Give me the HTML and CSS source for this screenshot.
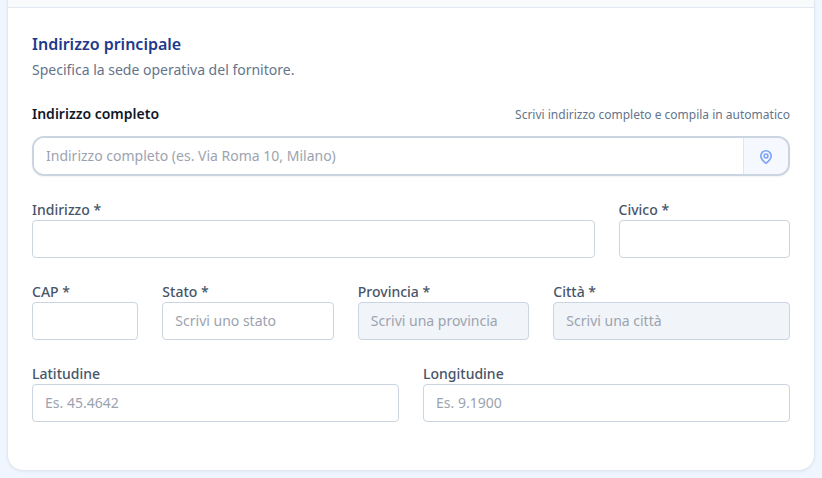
FILE: index.html
```html
<!DOCTYPE html>
<html lang="it">
  <head>
    <meta charset="UTF-8" />
    <meta name="viewport" content="width=device-width, initial-scale=1.0" />
    <title>Indirizzo principale</title>
    <link rel="stylesheet" href="styles.css">
  </head>
  <body>
    <form class="card">
      <div class="card-header"></div>

      <div class="card-body">
        <div class="intro">
          <h2>Indirizzo principale</h2>
          <p>Specifica la sede operativa del fornitore.</p>
        </div>

        <div class="search">
          <div class="search-top">
            <label for="fullAddress">Indirizzo completo</label>
            <span class="hint">Scrivi indirizzo completo e compila in automatico</span>
          </div>
          <div class="search-box">
            <input type="text" id="fullAddress" placeholder="Indirizzo completo (es. Via Roma 10, Milano)" />
            <button type="button" aria-label="Compila indirizzo" disabled>
              <svg viewBox="0 0 24 24" width="16" height="16" fill="none" stroke="currentColor" stroke-width="2.4" stroke-linecap="round" stroke-linejoin="round">
                <path d="M19.8 12c0 4.4-4.6 8.4-6.9 10.4a1.4 1.4 0 0 1-1.8 0C8.8 20.4 4.2 16.400 4.200 12a7.800 7.800 0 0 1 15.600 0" />
                <circle cx="12" cy="12" r="2.900" />
              </svg>
            </button>
          </div>
        </div>

        <div class="grid">
          <div class="field span-9">
            <label for="street">Indirizzo *</label>
            <input type="text" id="street" />
          </div>
          <div class="field span-3">
            <label for="number">Civico *</label>
            <input type="text" id="number" />
          </div>

          <div class="field span-2">
            <label for="zip">CAP *</label>
            <input type="text" id="zip" />
          </div>
          <div class="field span-3">
            <label for="country">Stato *</label>
            <input type="text" id="country" placeholder="Scrivi uno stato" />
          </div>
          <div class="field span-3">
            <label for="province">Provincia *</label>
            <input type="text" id="province" placeholder="Scrivi una provincia" disabled />
          </div>
          <div class="field span-4">
            <label for="city">Città *</label>
            <input type="text" id="city" placeholder="Scrivi una città" disabled />
          </div>

          <div class="field span-6">
            <label for="lat">Latitudine</label>
            <input type="text" id="lat" placeholder="Es. 45.4642" />
          </div>
          <div class="field span-6">
            <label for="lng">Longitudine</label>
            <input type="text" id="lng" placeholder="Es. 9.1900" />
          </div>
        </div>
      </div>
    </form>
  </body>
</html>
```

FILE: styles.css
```css
* {
  box-sizing: border-box;
}

body {
  margin: 0;
  padding: 0 7px 7px;
  background: #eff6ff;
  font-family: "Noto Sans", sans-serif;
  font-size: 14px;
  line-height: 20px;
  color: #475569;
}

.card {
  background: #fff;
  border: 1px solid #e2e8f0;
  border-top: none;
  border-radius: 0 0 16px 16px;
  box-shadow: 0 1px 3px rgba(15, 23, 42, 0.06);
}

.card-header {
  height: 8px;
  background: #f8fafc;
  border-bottom: 1px solid #e2e8f0;
}

.card-body {
  display: flex;
  flex-direction: column;
  gap: 24px;
  padding: 24px 24px 48px;
}

.intro {
  display: flex;
  flex-direction: column;
  gap: 4px;
}

.intro h2 {
  margin: 0;
  font-size: 16px;
  line-height: 24px;
  font-weight: 600;
  color: #1e3a8a;
}

.intro p {
  margin: 0;
  color: #64748b;
}

.search {
  display: flex;
  flex-direction: column;
  gap: 12px;
}

.search-top {
  display: flex;
  align-items: baseline;
  justify-content: space-between;
}

.search-top label {
  font-weight: 600;
  color: #0f172a;
}

.hint {
  font-size: 12px;
  line-height: 16px;
  color: #64748b;
}

.search-box {
  display: flex;
  height: 40px;
  border: 2px solid #cbd5e1;
  border-radius: 12px;
  box-shadow: 0 1px 2px rgba(0, 0, 0, 0.05);
  overflow: hidden;
}

.search-box input {
  flex: 1;
  min-width: 0;
  border: none;
  outline: none;
  padding: 0 12px;
  font: inherit;
  color: #0f172a;
}

.search-box button {
  display: flex;
  align-items: center;
  justify-content: center;
  width: 45px;
  padding: 0;
  border: none;
  border-left: 1px solid #cbd5e1;
  background: #eff6ff;
  color: #2563eb;
  opacity: 0.6;
}

.grid {
  display: grid;
  grid-template-columns: repeat(12, minmax(0, 1fr));
  gap: 24px;
}

.field {
  display: flex;
  flex-direction: column;
}

.field label {
  font-weight: 500;
}

.field input {
  width: 100%;
  padding: 8px 12px;
  border: 1px solid #cbd5e1;
  border-radius: 4px;
  background: #fff;
  font: inherit;
  color: #0f172a;
}

.field input:disabled {
  background: #f1f5f9;
}

input::placeholder {
  color: #9ca3af;
  opacity: 1;
}

.span-2 {
  grid-column: span 2;
}

.span-3 {
  grid-column: span 3;
}

.span-4 {
  grid-column: span 4;
}

.span-6 {
  grid-column: span 6;
}

.span-9 {
  grid-column: span 9;
}
```
